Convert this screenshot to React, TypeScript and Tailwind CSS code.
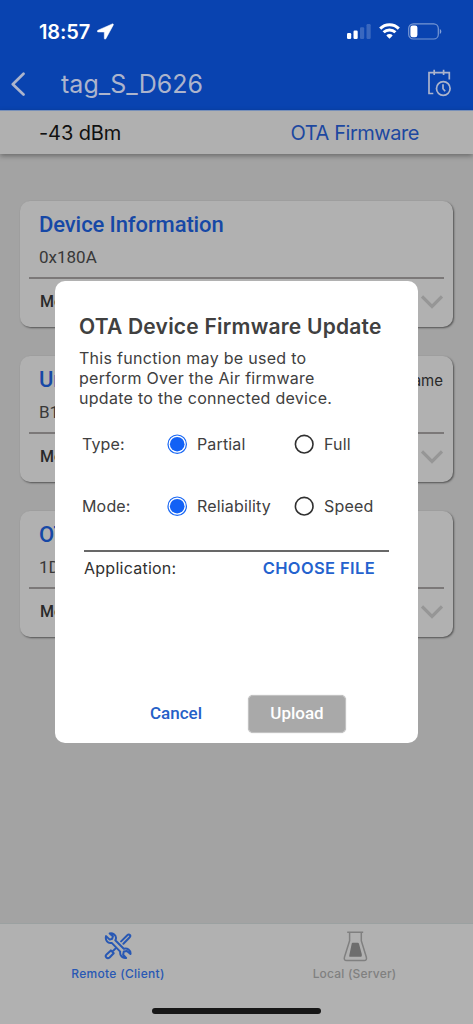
import React from "react";

type Service = { name: string; uuid: string; rename?: boolean };

const services: Service[] = [
  { name: "Device Information", uuid: "0x180A" },
  { name: "Unknown", uuid: "B1", rename: true },
  { name: "OTA", uuid: "1D14" },
];

function StatusBar() {
  return (
    <div className="flex h-[56px] items-start pl-[39px] pr-[31px] pt-[20px] text-white">
      <span className="w-[54px] whitespace-nowrap text-[20px] font-semibold leading-[24px] tracking-[-0.1px]">18:57</span>
      <svg className="ml-[4px] mt-[3px]" width="17" height="17" viewBox="0 0 17 17" fill="currentColor">
        <path d="M15.2 1 1 7.200c-1.200.6-.9 1.800.1 1.800h6.200v6.200c0 1.200 1.200 1.400 1.700.2L16.200 2.200c.5-1-.1-1.600-1-1.200Z" stroke="currentColor" strokeWidth=".5" />
      </svg>
      <div className="ml-auto flex items-start">
        <svg className="mt-[4px]" width="24" height="16" viewBox="0 0 24 16" fill="currentColor">
          <rect x="0" y="9" width="4.2" height="6" rx="1.2" />
          <rect x="6.5" y="6.5" width="4.2" height="8.5" rx="1.2" />
          <rect x="13" y="3.2" width="4.2" height="11.8" rx="1.2" opacity=".2" />
          <rect x="19.5" y="0" width="4.2" height="15" rx="1.2" opacity=".2" />
        </svg>
        <svg className="ml-[8px] mt-[3px]" width="21" height="17" viewBox="0 0 21 17" fill="none" stroke="currentColor" strokeWidth="3">
          <path d="M1.2 5.6a13.2 13.2 0 0 1 18.6 0" />
          <path d="M4.6 9.3a8.4 8.4 0 0 1 11.8 0" />
          <path d="M7.3 12.4a4.6 4.6 0 0 1 6.4 0L10.500 15.800Z" fill="currentColor" stroke="none" />
        </svg>
        <svg className="ml-[8px] mt-[3px]" width="34" height="17" viewBox="0 0 34 17">
          <rect x=".7" y=".8" width="29.6" height="15.2" rx="4.6" fill="none" stroke="white" strokeOpacity=".45" strokeWidth="1.2" />
          <rect x="2.4" y="2.6" width="7" height="11.6" rx="2.2" fill="white" />
          <path d="M31.8 6v5c1-.4 1.500-1.400 1.500-2.500S32.800 6.400 31.8 6Z" fill="white" fillOpacity=".5" />
        </svg>
      </div>
    </div>
  );
}

function TitleBar() {
  return (
    <div className="flex h-[54px] items-center pl-[10px] pr-[21px] text-[#acb4cc]">
      <svg className="mt-[1px]" width="16" height="24" viewBox="0 0 16 24" fill="none" stroke="currentColor" strokeWidth="2.700" strokeLinecap="round" strokeLinejoin="round">
        <path d="M13.500 1.700 2.800 12.200 13.500 22.500" />
      </svg>
      <h1 className="ml-[35px] mt-[2px] whitespace-nowrap text-[25px] leading-[30px] tracking-[0.05px]">tag_S_D626</h1>
      <svg className="ml-auto" width="25" height="28" viewBox="0 0 25 28" fill="none" stroke="currentColor" strokeWidth="1.700">
        <path d="M6.300 24.500H2V3.700h20.300V10.500M7.200 .8v5.300M16.600 .8v5.300" />
        <circle cx="16.300" cy="19.500" r="6.800" />
        <path d="M16 15.200v4.500l2.200 2.500" />
      </svg>
    </div>
  );
}

function ServiceCard({ name, uuid, rename }: Service) {
  return (
    <section className="h-[126px] rounded-[10px] bg-[#b1b1b1] px-[9px] font-['Roboto','Noto_Sans',sans-serif] shadow-[1px_1px_2px_rgba(0,0,0,0.5)]">
      <div className="flex h-[78px] justify-between border-b-2 border-[#7b7878] pl-[10px] pr-[1px]">
        <div className="whitespace-nowrap">
          <h2 className="pt-[10px] text-[22px] font-medium leading-[28px] tracking-[-0.1px] text-[#1648a6]">{name}</h2>
          <p className="mt-[8px] text-[17px] leading-[20px] text-[#383838]">{uuid}</p>
        </div>
        {rename && <span className="pt-[15px] font-['Inter',sans-serif] text-[15px] leading-[20px] text-[#292929]">Rename</span>}
      </div>
      <div className="flex h-[46px] items-center justify-between pl-[11px] pr-[1px]">
        <span className="text-[16px] font-medium text-[#292929]">More</span>
        <svg width="22" height="15" viewBox="0 0 22 15" fill="none" stroke="#969696" strokeWidth="3.200">
          <path d="m1 1.500 10 10 10-10" />
        </svg>
      </div>
    </section>
  );
}

function Radio({ label, checked, width }: { label: string; checked?: boolean; width?: string }) {
  return (
    <label className={`flex items-center ${width ?? ""}`}>
      <svg className="mr-[9px] shrink-0" width="21" height="21" viewBox="0 0 21 21">
        <circle cx="10.200" cy="10.200" r={checked ? 9.200 : 8.800} fill="none" stroke={checked ? "#1766f4" : "#303030"} strokeWidth={checked ? 1.200 : 1.600} />
        {checked && <circle cx="10.200" cy="10.200" r="7.300" fill="#1261f5" />}
      </svg>
      <span className="whitespace-nowrap">{label}</span>
    </label>
  );
}

function UpdateDialog() {
  return (
    <div role="dialog" className="absolute left-[55px] top-[281px] flex h-[462px] w-[363px] flex-col rounded-[10px] bg-white text-[#404040]">
      <h2 className="ml-[24px] mt-[33px] whitespace-nowrap text-[21px] font-semibold leading-[26px] tracking-[0.22px]">OTA Device Firmware Update</h2>
      <p className="ml-[24px] mt-[8px] whitespace-nowrap text-[16px] leading-[20px] tracking-[0.29px]">
        This function may be used to<br />perform Over the Air firmware<br />update to the connected device.
      </p>
      <div className="ml-[27px] mt-[24px] flex h-[24px] items-center text-[16px] tracking-[0.15px]">
        <span className="w-[85px]">Type:</span>
        <Radio label="Partial" checked width="w-[127px]" />
        <Radio label="Full" />
      </div>
      <div className="ml-[27px] mt-[38px] flex h-[24px] items-center text-[16px] tracking-[0.17px]">
        <span className="w-[85px]">Mode:</span>
        <Radio label="Reliability" checked width="w-[127px]" />
        <Radio label="Speed" />
      </div>
      <div className="ml-[29px] mr-[29px] mt-[32px] flex items-center justify-between border-t-2 border-[#686868] pr-[14px] pt-[4px] text-[16px] leading-[24px]">
        <span className="tracking-[0.25px] text-[#303030]">Application:</span>
        <button className="whitespace-nowrap text-[16.500px] font-semibold tracking-[0.37px] text-[#2462ce]">CHOOSE FILE</button>
      </div>
      <div className="mt-auto mb-[10px] flex items-center pl-[95px] font-['Roboto',sans-serif] text-[17px] font-medium">
        <button className="w-[98px] text-left text-[#2560c7]">Cancel</button>
        <button className="h-[38px] w-[98px] rounded-[5px] border border-[#c2c2c2] bg-[#a9a9a9] text-white shadow-[0_0_1px_#aaaaaa]">Upload</button>
      </div>
    </div>
  );
}

function TabBar() {
  return (
    <nav className="flex h-[101px] flex-col border-t border-[#9ba1a1] bg-[#b1b1b1]">
      <div className="flex h-[84px] text-[12px] font-medium leading-[16px]">
        <div className="flex w-[236px] flex-col items-center pt-[8px] text-[#2858b4]">
          <svg width="28" height="28" viewBox="0 0 28 28" fill="none" stroke="currentColor" strokeWidth="2" strokeLinecap="round" strokeLinejoin="round">
            <path d="M2.100 4.100 5.700 7.600 8.200 6.800 8.900 4.300 5.700 1.500C8.200.7 11.900 2.400 12 5.700c0 1.200-.3 2-.7 2.600l8.500 8.400c3.500-1 7.100 1.500 6.700 5.300l-3.600-3.100-3.100.6-.7 3.200 3 3.200c-3.500.6-6.500-2.200-5.900-6.300L7.700 10.900C3.800 12 .9 8 2.100 4.100Z" />
            <path d="m17.100 9.400 6.200-6.100c2-2 4.100.4 2.200 2.200l-6.100 6.200M11.400 16.600l-3.200 3.200M6.900 18.400l2.800 2.800-4.100 4.300c-2.400 2-5.200-1-3.100-3.100Z" />
          </svg>
          <span className="mt-[6px] whitespace-nowrap tracking-[0.3px]">Remote (Client)</span>
        </div>
        <div className="flex flex-1 flex-col items-center pt-[7px] text-[#808080]">
          <svg width="26" height="31" viewBox="0 0 26 31" fill="none" stroke="currentColor" strokeWidth="1.500" strokeLinejoin="round">
            <path d="M5.200 1.300h16M7.600 1.300v8.500L2.500 26c-.7 2.300.2 3.500 2 3.500h17.700c2 0 2.700-1.300 2.100-3.500L19.300 9.800V1.300" />
            <path d="M11 11.800h4.800c.6 0 1 .4 1.200 1l2.800 10.400v1.600c0 .5-.3.900-.9.900H8.100c-.7 0-1-.4-.9-1l2.500-11.900c.1-.6.6-1 1.300-1Z" fill="#6e6e6e" stroke="none" />
          </svg>
          <span className="mt-[4px] whitespace-nowrap tracking-[0.2px]">Local (Server)</span>
        </div>
      </div>
      <div className="mx-auto h-[6px] w-[169px] rounded-full bg-[#171717]" />
    </nav>
  );
}

export default function App() {
  return (
    <div className="relative flex h-[1024px] w-[473px] flex-col overflow-hidden bg-[#a3a3a3] font-['Inter','Noto_Sans',sans-serif]">
      <header className="h-[110px] shrink-0 bg-[#0943b0]">
        <StatusBar />
        <TitleBar />
      </header>
      <div className="z-10 flex h-[44px] shrink-0 items-center justify-between border-t border-[#7890b9] bg-[#b0b0b0] pl-[39px] pr-[54px] text-[20px] shadow-[0_2px_5px_rgba(0,0,0,0.35)]">
        <span className="tracking-[-0.1px] text-[#111111]">-43 dBm</span>
        <span className="tracking-[-0.45px] text-[#1d48a0]">OTA Firmware</span>
      </div>
      <main className="flex flex-1 flex-col gap-[29px] pl-[20px] pr-[20px] pt-[47px]">
        {services.map((service) => <ServiceCard key={service.name} {...service} />)}
      </main>
      <TabBar />
      <UpdateDialog />
    </div>
  );
}
